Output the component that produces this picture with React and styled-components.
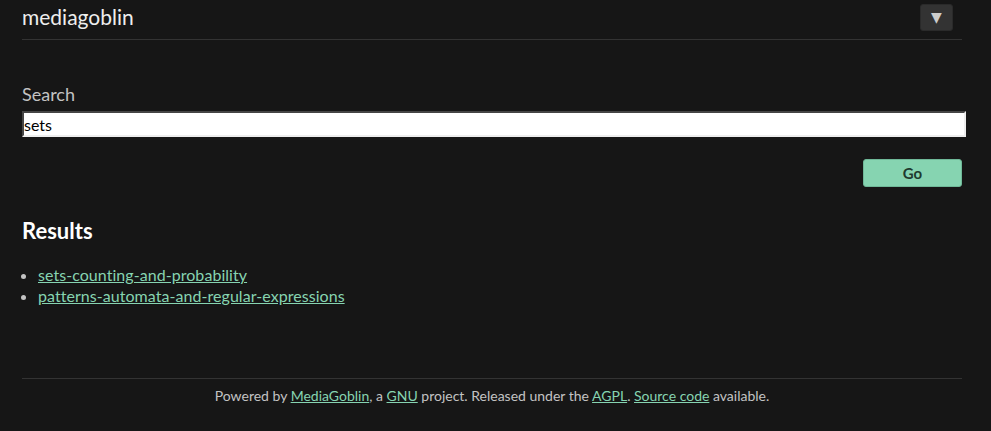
import React from "react";
import styled, { createGlobalStyle } from "styled-components";

const Global = createGlobalStyle`
  html, body { margin: 0; padding: 0; background: #161616; }
  body { font-family: Lato, "Open Sans", sans-serif; color: #c3c3c3; }
  a { color: #86d4b1; }
`;

const Container = styled.div`
  width: 940px;
  margin-left: 22px;
`;

const Header = styled.header`
  display: flex;
  align-items: center;
  justify-content: space-between;
  height: 39px;
  border-bottom: 1px solid #333;
`;

const Logo = styled.a`
  font-size: 21px;
  color: #eee;
  text-decoration: none;
  margin-top: -6px;
`;

const DropButton = styled.button`
  width: 33px;
  height: 27px;
  margin-right: 9px;
  margin-top: -5px;
  background: #333;
  border: 1px solid #2a2a2a;
  border-radius: 3px;
  color: #ccc;
  font-size: 14px;
  font-family: "DejaVu Sans", sans-serif;
  padding: 0;
  display: flex;
  align-items: center;
  justify-content: center;
`;

const Main = styled.main`
  padding-top: 44px;
  min-height: 294px;
  border-bottom: 1px solid #333;
`;

const Label = styled.label`
  display: block;
  font-size: 18px;
  color: #c3c3c3;
  line-height: 22px;
  margin-top: -1px;
  margin-bottom: 6px;
`;

const Input = styled.input`
  display: block;
  width: 940px;
  box-sizing: content-box;
  padding: 0;
  margin: 0;
  border: 2px inset #999;
  border-right-color: #eee;
  border-bottom-color: #eee;
  height: 22px;
  font-family: Lato, sans-serif;
  font-size: 16px;
  color: #000;
  background: #fff;
  outline: none;
`;

const Actions = styled.div`
  display: flex;
  justify-content: flex-end;
  margin-top: 22px;
`;

const GoButton = styled.button`
  width: 99px;
  height: 28px;
  background: #86d4b1;
  border: 1px solid #6fb898;
  border-radius: 3px;
  color: #1e3a2e;
  font-family: Lato, sans-serif;
  font-weight: bold;
  font-size: 15px;
  padding: 0;
`;

const Heading = styled.h2`
  margin: 30px 0 0;
  font-size: 22px;
  line-height: 28px;
  color: #fff;
  font-weight: bold;
`;

const List = styled.ul`
  margin: 19px 0 0;
  padding-left: 16px;
  font-size: 16px;
  letter-spacing: 0.05px;
  line-height: 21px;
  li::marker { color: #c3c3c3; }
`;

const Footer = styled.footer`
  text-align: center;
  font-size: 14px;
  padding-top: 9px;
  line-height: 16px;
  color: #c3c3c3;
`;

export default function App() {
  return (
    <>
      <Global />
      <Container>
        <Header>
          <Logo href="#">mediagoblin</Logo>
          <DropButton>▼</DropButton>
        </Header>
        <Main>
          <Label htmlFor="q">Search</Label>
          <Input id="q" defaultValue="sets" />
          <Actions>
            <GoButton>Go</GoButton>
          </Actions>
          <Heading>Results</Heading>
          <List>
            <li><a href="#">sets-counting-and-probability</a></li>
            <li><a href="#">patterns-automata-and-regular-expressions</a></li>
          </List>
        </Main>
        <Footer>
          Powered by <a href="#">MediaGoblin</a>, a <a href="#">GNU</a> project. Released under the <a href="#">AGPL</a>. <a href="#">Source code</a> available.
        </Footer>
      </Container>
    </>
  );
}
